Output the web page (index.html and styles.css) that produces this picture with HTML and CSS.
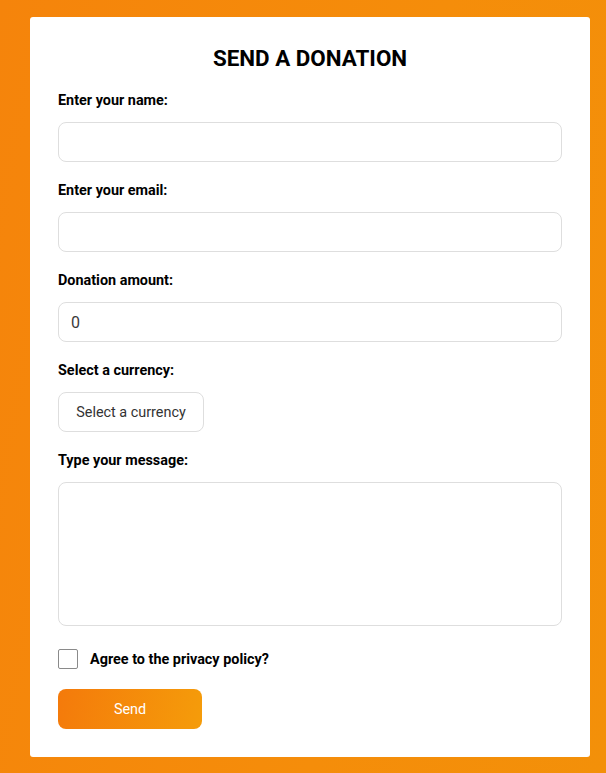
FILE: index.html
```html
<!DOCTYPE html>
<html lang="en">
<head>
<meta charset="utf-8">
<title>Send a donation</title>
<link rel="stylesheet" href="styles.css">
</head>
<body>
<main class="card">
  <h1 class="title">SEND A DONATION</h1>
  <form class="form">
    <div class="field">
      <label class="label" for="name">Enter your name:</label>
      <input class="input" id="name" type="text">
    </div>
    <div class="field">
      <label class="label" for="email">Enter your email:</label>
      <input class="input" id="email" type="email">
    </div>
    <div class="field">
      <label class="label" for="amount">Donation amount:</label>
      <input class="input input-amount" id="amount" type="text" value="0">
    </div>
    <div class="field">
      <span class="label">Select a currency:</span>
      <button class="currency" type="button">Select a currency</button>
    </div>
    <div class="field">
      <label class="label" for="message">Type your message:</label>
      <textarea class="textarea" id="message"></textarea>
    </div>
    <label class="agree">
      <span class="checkbox"></span>
      <span class="agree-text">Agree to the privacy policy?</span>
    </label>
    <button class="send" type="button">Send</button>
  </form>
</main>
</body>
</html>
```

FILE: styles.css
```css
html, body {
  margin: 0;
  padding: 0;
}
body {
  min-height: 773px;
  background: linear-gradient(100deg, #f5840b 0%, #f58d0a 60%, #f39009 100%);
  font-family: Roboto, "Liberation Sans", Arial, sans-serif;
  padding: 17px 16px 16px 30px;
  box-sizing: border-box;
}
.card {
  background: #fff;
  border-radius: 3px;
  padding: 28px;
  box-sizing: border-box;
  width: 560px;
}
.title {
  margin: 0 0 22px;
  font-size: 22.4px;
  line-height: 26px;
  font-weight: 700;
  text-align: center;
  color: #000;
}
.form {
  display: flex;
  flex-direction: column;
  gap: 21px;
}
.field {
  display: flex;
  flex-direction: column;
  align-items: flex-start;
  gap: 13px;
}
.label {
  font-size: 14.4px;
  line-height: 16px;
  font-weight: 700;
  color: #000;
}
.input, .textarea {
  width: 100%;
  box-sizing: border-box;
  height: 40px;
  border: 1px solid #dedede;
  border-radius: 8px;
  background: #fff;
  padding: 0 12px;
  font-family: Roboto, sans-serif;
  font-size: 16px;
  color: #333;
  outline: none;
}
.input-amount {
  color: #3a3a3a;
}
.textarea {
  height: 144px;
  resize: none;
  display: block;
}
.currency {
  height: 40px;
  width: 146px;
  box-sizing: border-box;
  border: 1px solid #dedede;
  border-radius: 8px;
  background: #fff;
  font-family: Roboto, sans-serif;
  font-size: 14.4px;
  color: #333;
  padding: 0;
}
.agree {
  display: flex;
  align-items: center;
  gap: 12px;
  margin-top: 2px;
  height: 20px;
}
.checkbox {
  width: 20px;
  height: 20px;
  box-sizing: border-box;
  border: 1px solid #8a8a8a;
  border-radius: 2px;
  background: #fff;
}
.agree-text {
  font-size: 14.4px;
  font-weight: 700;
  color: #000;
}
.send {
  margin-top: -1px;
  width: 144px;
  height: 40px;
  border: none;
  border-radius: 8px;
  background: linear-gradient(100deg, #f47a0b 0%, #f59c0a 100%);
  color: #fff;
  font-family: Roboto, sans-serif;
  font-size: 14.4px;
  padding: 0;
}
```
